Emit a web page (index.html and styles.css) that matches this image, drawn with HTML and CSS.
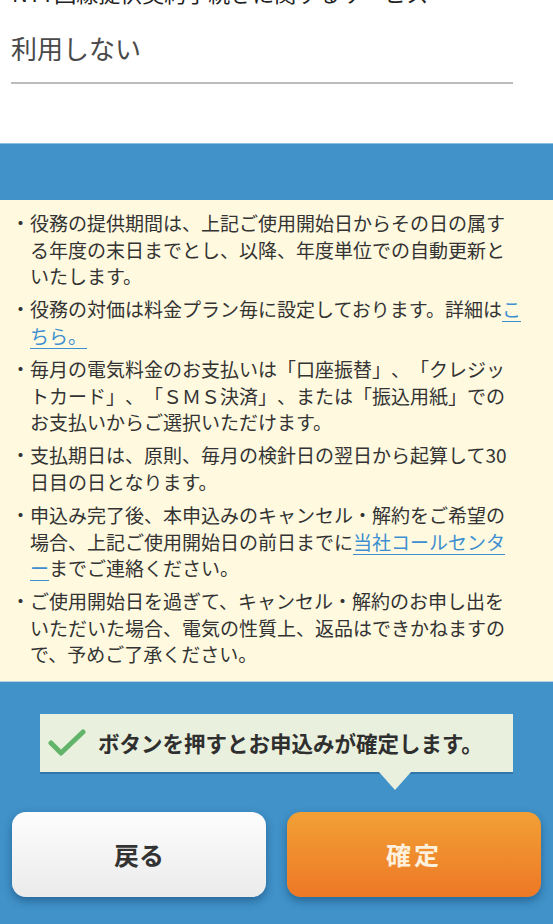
FILE: index.html
```html
<!DOCTYPE html>
<html lang="ja">
<head>
	<meta charset="UTF-8">
	<title>お申込み内容の確認</title>
	<meta name="viewport" content="width=device-width,user-scalable=no"/>
	<link rel="stylesheet" href="styles.css">
</head>
<body>
<div class="page">
	<!-- 入力項目（上部は画面外にスクロール済み） -->
	<section class="field">
		<p class="fieldLabel">NTT回線提供契約手続きに関するサービス</p>
		<div class="select">利用しない</div>
	</section>

	<section class="confirm">
		<!-- 注意事項 -->
		<div class="notes">
			<ul>
				<li>・役務の提供期間は、上記ご使用開始日からその日の属す<br>る年度の末日までとし、以降、年度単位での自動更新と<br>いたします。</li>
				<li>・役務の対価は料金プラン毎に設定しております。詳細は<a href="#">こ<br>ちら。</a></li>
				<li>・毎月の電気料金のお支払いは「口座振替」、「クレジッ<br>トカード」、「ＳＭＳ決済」、または「振込用紙」での<br>お支払いからご選択いただけます。</li>
				<li>・支払期日は、原則、毎月の検針日の翌日から起算して30<br>日目の日となります。</li>
				<li>・申込み完了後、本申込みのキャンセル・解約をご希望の<br>場合、上記ご使用開始日の前日までに<a href="#">当社コールセンタ<br>ー</a>までご連絡ください。</li>
				<li>・ご使用開始日を過ぎて、キャンセル・解約のお申し出を<br>いただいた場合、電気の性質上、返品はできかねますの<br>で、予めご了承ください。</li>
			</ul>
		</div>

		<!-- 吹き出し -->
		<div class="callout">
			<svg class="check" width="38" height="28" viewBox="0 0 38 28">
				<polyline points="3,14 13,24 35,3" fill="none" stroke="#63b46b" stroke-width="5" stroke-linecap="round" stroke-linejoin="round"/>
			</svg>
			<p>ボタンを押すとお申込みが確定します。</p>
		</div>

		<!-- ボタン -->
		<div class="buttons">
			<a href="javascript:;" class="btn back">戻る</a>
			<a href="javascript:;" class="btn ok">確定</a>
		</div>
	</section>
</div>
</body>
</html>
```

FILE: styles.css
```css
body,
p {
	margin: 0;
}

ul {
	margin: 0;
	padding: 0;
	list-style: none;
}

a {
	text-decoration: none;
	-webkit-tap-highlight-color: transparent;
}

html,
body {
	height: 100%;
}

body {
	font-family: "Noto Sans CJK JP", "Noto Sans", sans-serif;
	color: #333;
	/* 約物を詰めない（全角のまま） */
	text-spacing-trim: space-all;
}

.page {
	height: 100%;
	overflow: hidden;
	background: #4092c9;
}

/* 上の入力欄 */
.field {
	height: 143px;
	overflow: hidden;
	background: #fff;
}

.fieldLabel {
	margin-top: -21px;
	padding: 0 12px;
	white-space: nowrap;
	font-size: 22px;
	line-height: 26px;
	color: #222;
}

.select {
	margin: 25px 40px 0 11px;
	padding-bottom: 16px;
	border-bottom: 2px solid #bcbcbc;
	font-size: 26px;
	line-height: 36px;
	color: #4a4a4a;
}

/* 青い部分 */
.confirm {
	padding: 57px 0 0;
	box-shadow: inset 0 1px 0 #8cbfe2;
}

.notes {
	padding: 10px 10px 13px 11px;
	background: #fef9df;
	box-shadow: 0 1px 0 #b9cfd9;
}

.notes li {
	padding-left: 19px;
	text-indent: -19px;
	white-space: nowrap;
	font-size: 19px;
	line-height: 26.6px;
	color: #333;
}

.notes li + li {
	margin-top: 6.5px;
}

.notes a {
	color: #3d8fd1;
	text-decoration: underline;
	text-underline-offset: 4px;
}

/* 吹き出し */
.callout {
	position: relative;
	display: flex;
	align-items: center;
	margin: 33px 0 0 40px;
	width: 473px;
	height: 58px;
	background: #e9f0dd;
	box-shadow: 0 2px 0 rgba(20, 70, 110, .35);
}

.callout:after {
	content: "";
	position: absolute;
	left: 339px;
	top: 58px;
	border-top: 18px solid #e9f0dd;
	border-left: 16px solid transparent;
	border-right: 16px solid transparent;
}

.check {
	margin: 0 12px 0 8px;
}

.callout p {
	font-size: 21.5px;
	font-weight: bold;
	line-height: 30px;
	color: #2f2f2f;
	white-space: nowrap;
}

/* ボタン */
.buttons {
	display: flex;
	gap: 21px;
	margin-top: 40px;
	padding: 0 12px;
}

.btn {
	flex: 1;
	height: 85px;
	border-radius: 14px;
	font-size: 25px;
	font-weight: bold;
	line-height: 85px;
	text-align: center;
	box-shadow: 0 4px 8px rgba(10, 50, 90, .45);
}

.back {
	background: linear-gradient(#fdfdfd, #ebebeb);
	color: #333;
}

.ok {
	background: linear-gradient(#f1a035, #ee7826);
	color: #fdf0dc;
	letter-spacing: 3px;
}
```
